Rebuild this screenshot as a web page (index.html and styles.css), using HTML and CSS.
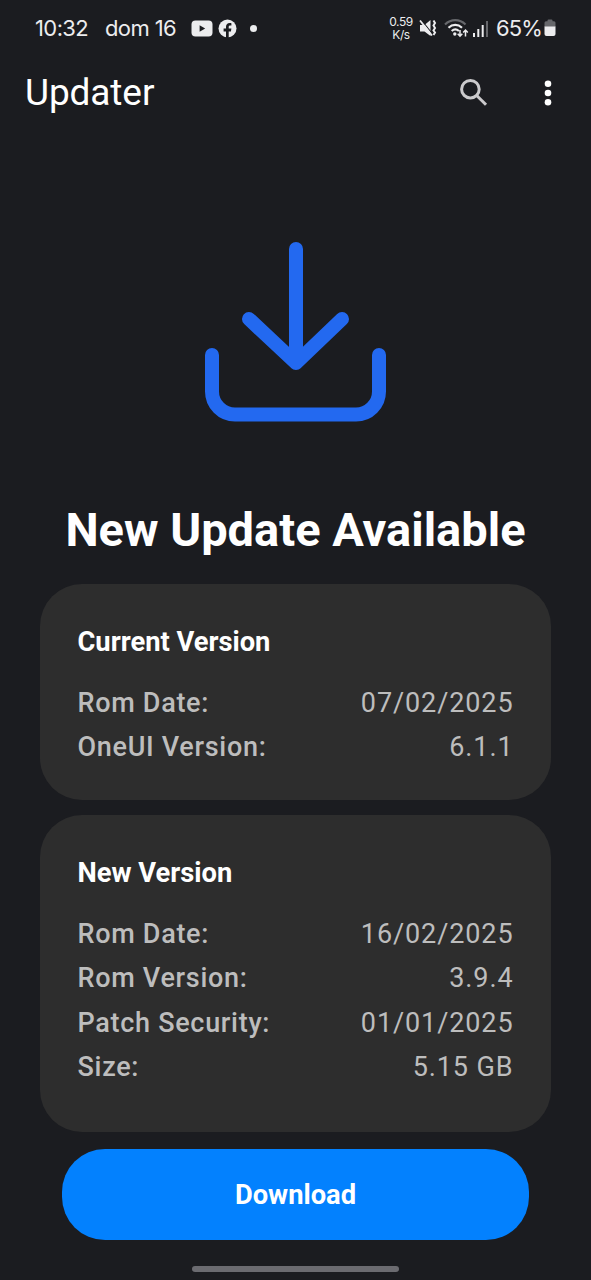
FILE: index.html
```html
<!DOCTYPE html>
<html lang="en">
<head>
<meta charset="utf-8">
<title>Updater</title>
<link rel="stylesheet" href="styles.css">
</head>
<body>
<div class="screen">
  <header class="status">
    <span class="clock">10:32</span>
    <span class="date">dom 16</span>
    <svg class="youtube" width="22" height="17" viewBox="0 0 22 17"><rect x="0.5" y="0.5" width="21" height="16" rx="4" fill="#ececee"/><path d="M8.6 5.2v6.6l5.6-3.3z" fill="#1b1c20"/></svg>
    <svg class="facebook" width="19" height="19" viewBox="0 0 19 19"><circle cx="9.5" cy="9.5" r="9" fill="#ececee"/><path d="M8 19v-6.600H5.600V9.600H8V7.800c0-2.500 1.500-3.800 3.700-3.800.8 0 1.700.2 1.700.2v2.300h-1.200c-1.100 0-1.500.6-1.500 1.400v1.700h2.700l-.5 2.800h-2.200V19z" fill="#1b1c20"/></svg>
    <span class="more-dot"></span>
    <span class="speed"><span>0.59</span><span>K/s</span></span>
    <svg class="mute" width="18" height="18" viewBox="0 0 18 18"><path d="M1 6h4.500l6-5v16l-6-4.500H1z" fill="#ececee"/><path d="M2.500 1l11 14" stroke="#1b1c20" stroke-width="1.200"/><path d="M1 1.500l12 15" stroke="#ececee" stroke-width="1.800"/><path d="M14.500 1.500l1.500 2.500-1.500 2.500 1.500 2.500-1.500 2.500 1.500 2-1.500 2.500" fill="none" stroke="#ececee" stroke-width="2"/></svg>
    <svg class="wifi" width="25" height="20" viewBox="0 0 25 20" fill="none" stroke-width="2.200"><path d="M1 6.500C7 .7 15.500.7 21.500 6.500" stroke="#66676b"/><path d="M4.500 9.700c4-3.700 9.500-3.700 13.500 0M7.700 13c2.200-2 5-2 7.200 0" stroke="#ececee"/><circle cx="10.800" cy="16" r="1.700" fill="#ececee"/><path d="M16 12v6M13.700 15.800l2.300 2.400 2.300-2.400M21.500 18.500v-6M19.200 14.500l2.300-2.400 2.300 2.400" stroke="#ececee" stroke-width="1.500"/></svg>
    <svg class="signal" width="16" height="17" viewBox="0 0 16 17"><path d="M0 13h2v4H0zM4.300 9h2v8h-2zM8.700 5h2v12h-2z" fill="#ececee"/><path d="M13 1h2v16h-2z" fill="#66676b"/></svg>
    <span class="percent">65%</span>
    <svg class="battery" width="12" height="18" viewBox="0 0 12 18"><path d="M3.500 2.200V1.500q0-1 1-1h3q1 0 1 1v.7H10q1.500 0 1.500 1.500V8H.5V3.700Q.5 2.200 2 2.200z" fill="#66676b"/><path d="M.5 7.500h11V15q0 2-2 2h-7q-2 0-2-2z" fill="#ececee"/></svg>
  </header>

  <div class="toolbar">
    <h1 class="app-title">Updater</h1>
    <svg class="search" width="30" height="30" viewBox="0 0 30 30" fill="none" stroke="#cbcacc" stroke-width="3"><circle cx="11.400" cy="11.200" r="8.800"/><path d="M17.700 17.500l9.300 9.300"/></svg>
    <svg class="kebab" width="8" height="28" viewBox="0 0 8 28" fill="#fff"><circle cx="4" cy="4.800" r="3.300"/><circle cx="4" cy="14" r="3.300"/><circle cx="4" cy="23.200" r="3.300"/></svg>
  </div>

  <svg class="hero" width="182" height="182" viewBox="0 0 182 182" fill="none" stroke="#2369f0" stroke-width="14" stroke-linecap="round" stroke-linejoin="round"><path d="M91 8v114M44 78l47 44L137 78M7 114v36.500a23 23 0 0 0 23 23h121a23 23 0 0 0 23-23V114"/></svg>

  <h2 class="headline">New Update Available</h2>

  <section class="card">
    <h3 class="card-title">Current Version</h3>
    <div class="row"><span class="label">Rom Date:</span><span class="value">07/02/2025</span></div>
    <div class="row"><span class="label">OneUI Version:</span><span class="value">6.1.1</span></div>
  </section>

  <section class="card card-new">
    <h3 class="card-title">New Version</h3>
    <div class="row"><span class="label">Rom Date:</span><span class="value">16/02/2025</span></div>
    <div class="row"><span class="label">Rom Version:</span><span class="value">3.9.4</span></div>
    <div class="row"><span class="label">Patch Security:</span><span class="value">01/01/2025</span></div>
    <div class="row"><span class="label">Size:</span><span class="value">5.15 GB</span></div>
  </section>

  <button class="download">Download</button>
  <div class="home-bar"></div>
</div>
</body>
</html>
```
FILE: styles.css
```css
* { box-sizing: border-box; margin: 0; }
body { background: #1b1c20; color: #fff; font-family: Roboto, sans-serif; }
svg { display: block; flex: none; }
.screen { width: 591px; height: 1280px; display: flex; flex-direction: column; overflow: hidden; }

.status { height: 56px; display: flex; align-items: center; padding-left: 35px; color: #ececee; font-family: Inter, sans-serif; font-size: 22px; white-space: nowrap; }
.clock { width: 70px; letter-spacing: -0.6px; }
.date { width: 85.5px; letter-spacing: -0.6px; }
.facebook { margin-left: 5px; }
.more-dot { width: 7px; height: 7px; border-radius: 50%; background: #ececee; margin-left: 13.5px; }
.speed { width: 24px; margin-left: 132px; display: flex; flex-direction: column; align-items: center; font-size: 12px; line-height: 13px; letter-spacing: -0.4px; }
.mute { margin-left: 6px; }
.wifi { margin-left: 7px; }
.signal { margin-left: 4px; }
.percent { width: 48px; margin-left: 7px; letter-spacing: -0.9px; }

.toolbar { height: 74px; display: flex; align-items: center; padding: 0 39px 0 25px; }
.app-title { flex: 1; font-weight: 400; font-size: 37px; line-height: 44px; letter-spacing: -0.1px; }
.search { margin-right: 55px; }

.hero { margin: 111px 0 0 205px; }

.headline { margin-top: 77px; height: 60px; line-height: 60px; text-align: center; font-size: 47px; font-weight: 700; white-space: nowrap; }

.card { height: 216px; margin: 24px 40px 0; padding: 36px 37.5px 0; border-radius: 42px; background: #2d2d2d; }
.card-new { height: 317px; margin-top: 15px; }
.card-title { height: 61px; line-height: 44px; font-size: 27.3px; font-weight: 700; }
.row { display: flex; justify-content: space-between; height: 44.4px; line-height: 44.4px; font-size: 27px; letter-spacing: 0.9px; color: #bdbdbd; }
.label { font-weight: 500; letter-spacing: 0.7px; }

.download { height: 91px; margin: 17px 62px 0; border: 0; border-radius: 43px; background: #0381fe; color: #fff; font: 700 27.3px Roboto, sans-serif; }
.home-bar { width: 207px; height: 6px; margin: 26px 0 0 192px; border-radius: 3px; background: #6b6b70; }
```
